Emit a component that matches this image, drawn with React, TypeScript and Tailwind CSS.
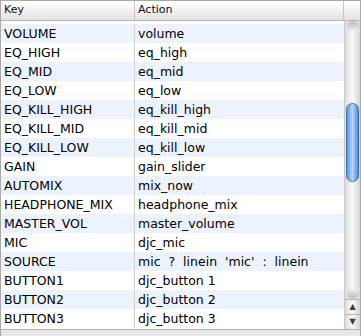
import React from 'react'

const rows: [string, string][] = [
  ['VOLUME', 'volume'],
  ['EQ_HIGH', 'eq_high'],
  ['EQ_MID', 'eq_mid'],
  ['EQ_LOW', 'eq_low'],
  ['EQ_KILL_HIGH', 'eq_kill_high'],
  ['EQ_KILL_MID', 'eq_kill_mid'],
  ['EQ_KILL_LOW', 'eq_kill_low'],
  ['GAIN', 'gain_slider'],
  ['AUTOMIX', 'mix_now'],
  ['HEADPHONE_MIX', 'headphone_mix'],
  ['MASTER_VOL', 'master_volume'],
  ['MIC', 'djc_mic'],
  ['SOURCE', "mic ? linein 'mic' : linein"],
  ['BUTTON1', 'djc_button 1'],
  ['BUTTON2', 'djc_button 2'],
  ['BUTTON3', 'djc_button 3'],
]

function Scrollbar() {
  return (
    <div className="w-[16px] flex flex-col bg-gradient-to-r from-[#dcdcdc] via-[#fafafa] to-[#d4d4d4] border-l border-[#c8c8c8]">
      <div className="flex-1 flex flex-col">
        <div className="h-[10px] mx-[1px] rounded-t-full bg-gradient-to-b from-[#bdbdbd] to-[#ececec]" />
        <div className="h-[72px]" />
        <div className="h-[79px] mx-[1px] rounded-full border border-[#3b6fb8] bg-gradient-to-r from-[#5d96e0] via-[#b7d6fb] to-[#4d8ad9]" />
        <div className="flex-1" />
        <div className="h-[10px] mx-[1px] rounded-b-full bg-gradient-to-t from-[#bdbdbd] to-[#ececec]" />
      </div>
      <div className="h-[15px] flex items-center justify-center border-t border-[#b8b8b8] text-[8px] text-[#3c3c3c]">▲</div>
      <div className="h-[15px] flex items-center justify-center border-t border-[#b8b8b8] text-[8px] text-[#3c3c3c]">▼</div>
    </div>
  )
}

export default function App() {
  return (
    <div className="w-[361px] h-[336px] flex flex-col bg-[#e8e8e8] border-t border-l border-r border-[#a8a8a8] overflow-hidden" style={{ fontFamily: '"DejaVu Sans", sans-serif' }}>
      <div className="h-[20px] flex bg-gradient-to-b from-white to-[#e4e4e4] border-b border-[#b4b4b4] text-[11px] text-[#111]">
        <div className="w-[134px] pl-[3px] flex items-center border-r border-[#c4c4c4]">Key</div>
        <div className="w-[209px] pl-[3px] flex items-center border-r border-[#c4c4c4]">Action</div>
        <div className="flex-1" />
      </div>
      <div className="h-[308px] flex bg-white">
        <div className="flex-1 pt-[3px]">
          {rows.map(([k, a], i) => (
            <div key={k} className={`h-[19px] flex items-center text-[12.5px] text-black ${i % 2 === 0 ? 'bg-[#edf3fe]' : 'bg-white'}`}>
              <div className="w-[134px] pl-[3px] pt-[1px] h-full flex items-center border-r border-[#d0d0d0] whitespace-nowrap">{k}</div>
              <div className={`flex-1 pl-[3px] pt-[1px] whitespace-nowrap ${a.includes('?') ? '[word-spacing:4px]' : ''}`}>{a}</div>
            </div>
          ))}
        </div>
        <Scrollbar />
      </div>
      <div className="flex-1 border-t border-[#b0b0b0] bg-[#e8e8e8]" />
    </div>
  )
}
